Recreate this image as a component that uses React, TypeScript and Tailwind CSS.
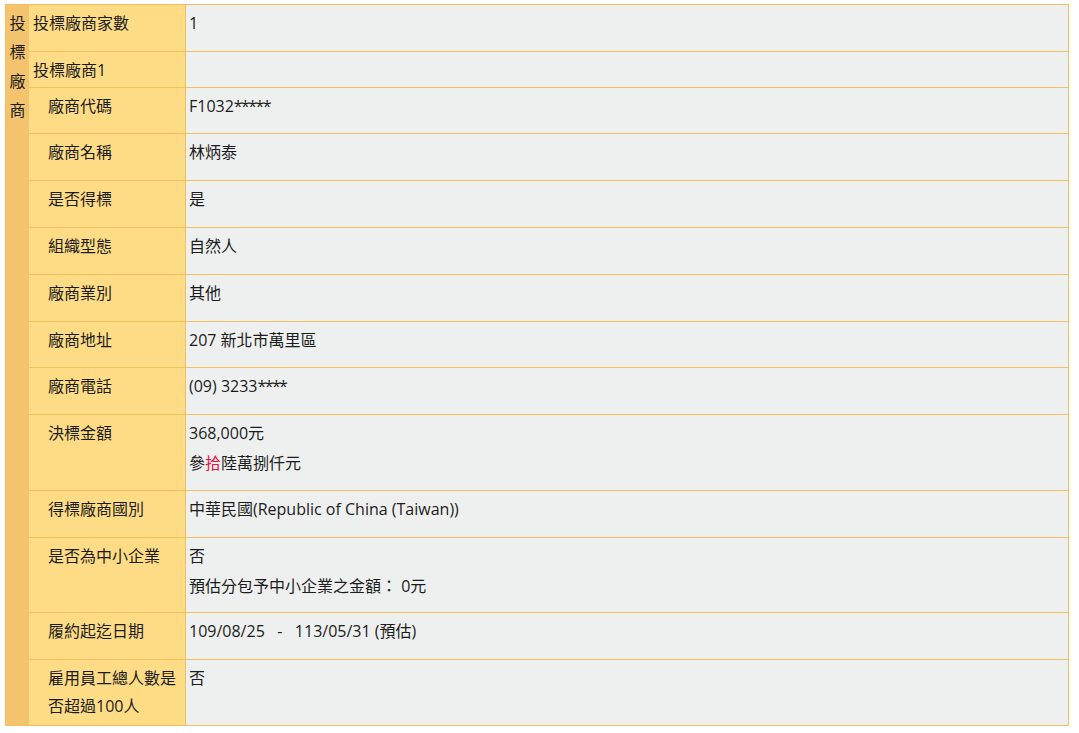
import React from "react";

type Row = {
  label: React.ReactNode;
  value?: React.ReactNode;
  indent?: boolean;
  h: string;
};

const Stars = ({ n }: { n: number }) => (
  <span className="tracking-[-1.6px]">{"*".repeat(n)}</span>
);

const rows: Row[] = [
  { label: "投標廠商家數", value: "1", h: "h-[47px]" },
  { label: "投標廠商1", h: "h-[36px]" },
  {
    label: "廠商代碼",
    value: (
      <>
        F1032<Stars n={5} />
      </>
    ),
    indent: true,
    h: "h-[46px]",
  },
  { label: "廠商名稱", value: "林炳泰", indent: true, h: "h-[47px]" },
  { label: "是否得標", value: "是", indent: true, h: "h-[47px]" },
  { label: "組織型態", value: "自然人", indent: true, h: "h-[47px]" },
  { label: "廠商業別", value: "其他", indent: true, h: "h-[47px]" },
  { label: "廠商地址", value: "207 新北市萬里區", indent: true, h: "h-[46px]" },
  {
    label: "廠商電話",
    value: (
      <>
        (09) 3233<Stars n={4} />
      </>
    ),
    indent: true,
    h: "h-[47px]",
  },
  {
    label: "決標金額",
    value: (
      <>
        <div>368,000元</div>
        <div>
          參<span className="text-[#ee1144]">拾</span>陸萬捌仟元
        </div>
      </>
    ),
    indent: true,
    h: "h-[76px]",
  },
  { label: "得標廠商國別", value: "中華民國(Republic of China (Taiwan))", indent: true, h: "h-[47px]" },
  {
    label: "是否為中小企業",
    value: (
      <>
        <div>否</div>
        <div>預估分包予中小企業之金額： 0元</div>
      </>
    ),
    indent: true,
    h: "h-[75px]",
  },
  {
    label: "履約起迄日期",
    value: <span className="whitespace-pre">{"109/08/25   -   113/05/31 (預估)"}</span>,
    indent: true,
    h: "h-[47px]",
  },
  {
    label: (
      <div className="leading-[28px] pt-[1px]">
        雇用員工總人數是
        <br />
        否超過100人
      </div>
    ),
    value: "否",
    indent: true,
    h: "h-[65px]",
  },
];

export default function App() {
  return (
    <div
      className="min-h-screen bg-white pt-[4px] pl-[5px] text-[16px] text-[#1c1c1c]"
      style={{ fontFamily: '"Open Sans", "Noto Sans CJK TC", sans-serif' }}
    >
      <div className="flex w-[1064px] border border-[#f5be5e]">
        <div className="w-[23px] shrink-0 bg-[#f3c46d] pt-[4px] text-center leading-[29px]">
          <div>投</div>
          <div>標</div>
          <div>廠</div>
          <div>商</div>
        </div>
        <div className="flex flex-1 flex-col">
          {rows.map((r, i) => (
            <div
              key={i}
              className={`flex ${r.h} ${i < rows.length - 1 ? "border-b border-[#f5be5e]" : ""}`}
            >
              <div
                className={`w-[157px] shrink-0 border-r border-[#f5be5e] bg-[#fedc86] pt-[3px] leading-[30px] ${
                  r.indent ? "pl-[19px]" : "pl-[4px]"
                }`}
              >
                {r.label}
              </div>
              <div className="flex-1 bg-[#eef0ef] pl-[3px] pt-[3px] leading-[30px]">{r.value}</div>
            </div>
          ))}
        </div>
      </div>
    </div>
  );
}
